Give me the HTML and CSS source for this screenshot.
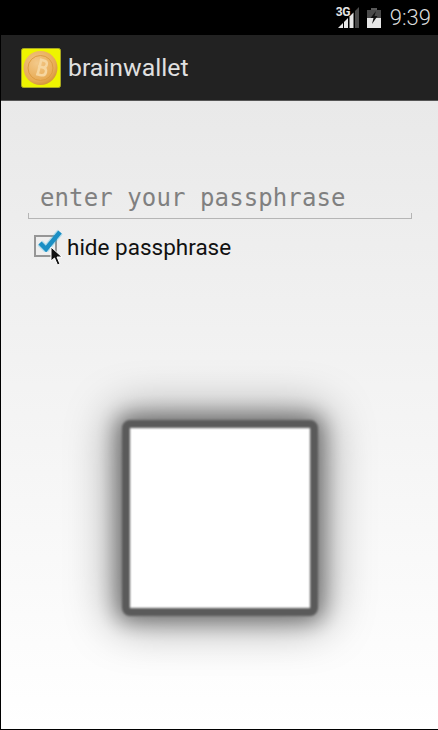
FILE: index.html
```html
<!DOCTYPE html>
<html lang="en">
  <head>
    <meta charset="UTF-8" />
    <meta name="viewport" content="width=device-width, initial-scale=1.0" />
    <title>brainwallet</title>
    <link rel="stylesheet" href="styles.css">
  </head>
  <body>
    <div class="phone">
      <div class="status-bar">
        <span class="net-icon">
          <svg class="signal" width="21" height="21" viewBox="0 0 21 21">
            <polygon points="17,4 21,0 21,21 17,21" fill="#4a4a4a" />
            <polygon points="0,21 5,16 5,21" fill="#e6e6e6" />
            <polygon points="6,15 10,11 10,21 6,21" fill="#e6e6e6" />
            <polygon points="11.500,9.500 15.500,5.500 15.500,21 11.500,21" fill="#e6e6e6" />
          </svg>
          <span class="net-label">3G</span>
        </span>
        <svg class="battery" width="14" height="20" viewBox="0 0 14 20">
          <rect x="4" y="0" width="6" height="2" fill="#5a5a5a" />
          <rect x="0" y="2" width="14" height="18" fill="#4a4a4a" />
          <rect x="0" y="10" width="14" height="10" fill="#e6e6e6" />
          <polygon points="9,3 3.500,10 6.500,10 5,16 10.500,8 7.500,8" fill="#111" />
        </svg>
        <span class="clock">9:39</span>
      </div>
      <div class="action-bar">
        <svg class="app-icon" width="40" height="40" viewBox="0 0 40 40">
          <defs>
            <radialGradient id="coin" cx="0.4" cy="0.35" r="0.75">
              <stop offset="0" stop-color="#f3c98a" />
              <stop offset="0.7" stop-color="#e8ab55" />
              <stop offset="1" stop-color="#c98a2e" />
            </radialGradient>
          </defs>
          <rect x="0.5" y="0.5" width="39" height="39" rx="2" fill="#eef400" stroke="#a8a820" />
          <circle cx="19.500" cy="20" r="17" fill="url(#coin)" />
          <circle cx="19.500" cy="20" r="12.500" fill="none" stroke="#dc9c42" stroke-width="1" />
          <g transform="rotate(14 20 19)">
            <path d="M17 12h4q4 0 4 3.500t-4 3.500h-4h5q4 0 4 4t-5 4h-4M18.500 12v15" fill="none" stroke="#f6d6a0" stroke-width="2.500" />
          </g>
        </svg>
        <span class="app-title">brainwallet</span>
      </div>
      <div class="content">
        <div class="pass-input">enter your passphrase</div>
        <div class="check-row">
          <span class="check-box">
            <svg class="check-mark" width="28" height="24" viewBox="0 0 28 24">
              <path d="M5 15l6 6L25 4" fill="none" stroke="#33b5e5" stroke-width="7" opacity="0.3" />
              <path d="M5 15l6 6L25 4" fill="none" stroke="#1b8fc4" stroke-width="4.500" />
            </svg>
            <svg class="cursor" width="13" height="20" viewBox="0 0 13 20">
              <path d="M1 1v14l3.500-3 3 7 2.500-1-3-7h5z" fill="#111" stroke="#fff" stroke-width="1" />
            </svg>
          </span>
          <span class="check-label">hide passphrase</span>
        </div>
        <div class="qr-wrap">
          <div class="qr-box"></div>
        </div>
      </div>
    </div>
  </body>
</html>
```

FILE: styles.css
```css
html,
body {
  margin: 0;
  padding: 0;
  background-color: #000;
}
.phone {
  width: 437px;
  height: 729px;
  margin-left: 1px;
  display: flex;
  flex-direction: column;
  font-family: Roboto, "Liberation Sans", sans-serif;
  overflow: hidden;
}
.status-bar {
  height: 35px;
  background-color: #000;
  display: flex;
  align-items: center;
  justify-content: flex-end;
  padding-right: 7px;
  flex: none;
}
.net-icon {
  position: relative;
  width: 21px;
  height: 21px;
  margin-top: -1px;
}
.net-label {
  position: absolute;
  left: -2px;
  top: -2px;
  color: #e6e6e6;
  font-size: 12px;
  font-weight: bold;
  letter-spacing: -0.5px;
  text-shadow: 0 0 1px #000;
}
.signal {
  display: block;
}
.battery {
  margin: 0 9px 0 8px;
}
.clock {
  color: #dcdcdc;
  font-size: 22px;
  font-weight: 300;
}
.action-bar {
  height: 66px;
  background-color: #222;
  border-bottom: 1px solid #555;
  box-sizing: border-box;
  display: flex;
  align-items: center;
  padding-left: 20px;
  flex: none;
}
.app-title {
  color: #e0e0e0;
  font-size: 24.8px;
  margin-left: 7px;
}
.content {
  flex: 1;
  background: linear-gradient(#e9e9e9, #ffffff);
  padding: 79px 26px 0 27px;
}
.pass-input {
  height: 39px;
  box-sizing: border-box;
  padding-left: 12px;
  border-bottom: 1px solid #b5b5b5;
  font-family: "DejaVu Sans Mono", monospace;
  font-size: 24px;
  letter-spacing: 0.1px;
  line-height: 37px;
  color: #808080;
  position: relative;
}
.pass-input::before,
.pass-input::after {
  content: "";
  position: absolute;
  bottom: 0;
  width: 1px;
  height: 5px;
  background-color: #b5b5b5;
}
.pass-input::before {
  left: 0;
}
.pass-input::after {
  right: 0;
}
.check-row {
  display: flex;
  align-items: center;
  margin-top: 15px;
  padding-left: 6px;
}
.check-box {
  position: relative;
  width: 23px;
  height: 22px;
  margin-top: -2px;
  border: 2px solid #969696;
  box-sizing: border-box;
  flex: none;
}
.check-mark {
  position: absolute;
  left: -1px;
  top: -9px;
}
.cursor {
  position: absolute;
  left: 14px;
  top: 9px;
}
.check-label {
  margin-left: 10px;
  font-size: 22.5px;
  color: #111;
}
.qr-wrap {
  display: flex;
  justify-content: center;
  margin-top: 160px;
}
.qr-box {
  width: 180px;
  height: 180px;
  background-color: #fff;
  border: 8px solid #5a5a5a;
  border-radius: 8px;
  box-shadow: 0 0 20px 6px rgba(0, 0, 0, 0.38), 0 0 46px 10px rgba(0, 0, 0, 0.36);
  filter: blur(1px);
}
```
